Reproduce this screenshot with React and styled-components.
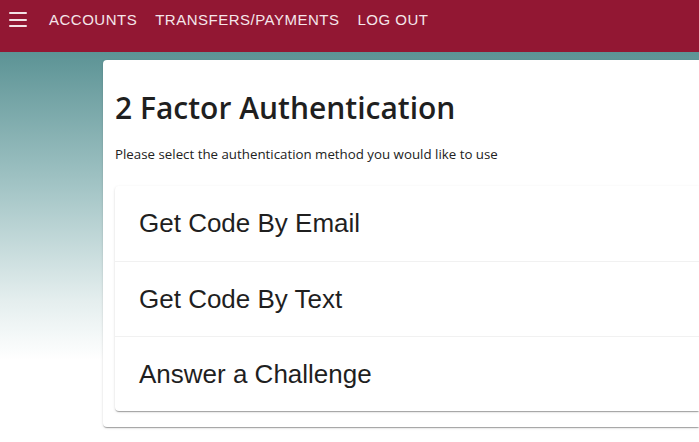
import React from 'react';
import styled, { createGlobalStyle } from 'styled-components';

const GlobalStyle = createGlobalStyle`
  html, body {
    margin: 0;
    padding: 0;
    height: 100%;
    overflow: hidden;
  }
  body {
    background: #ffffff;
    font-family: 'Liberation Sans', Arial, sans-serif;
  }
`;

const Page = styled.div`
  width: 100vw;
  height: 100vh;
  display: flex;
  flex-direction: column;
  background: linear-gradient(180deg, #5c9395 52px, #9fc2c3 180px, #e4eeee 300px, #ffffff 360px);
`;

const NavBar = styled.header`
  height: 52px;
  flex-shrink: 0;
  background-color: #921733;
  display: flex;
  align-items: center;
  padding: 0 0 13px 9px;
  box-sizing: border-box;
`;

const MenuButton = styled.button`
  width: 18px;
  height: 15px;
  padding: 0;
  margin-right: 22px;
  border: none;
  background: transparent;
  display: flex;
  flex-direction: column;
  justify-content: space-between;
  cursor: pointer;

  span {
    display: block;
    height: 2px;
    border-radius: 1px;
    background: #f3e3e7;
  }
`;

const NavLinks = styled.nav`
  display: flex;
  gap: 18px;
`;

const NavLink = styled.a`
  font-family: 'Liberation Sans', Arial, sans-serif;
  font-size: 15px;
  letter-spacing: 0.5px;
  color: #f5e6ea;
  text-decoration: none;
  text-transform: uppercase;
  cursor: pointer;
`;

const Main = styled.main`
  flex: 1;
  padding: 8px 0 0 103px;
  display: flex;
  align-items: flex-start;
`;

const Card = styled.section`
  flex: 1;
  background: #ffffff;
  border-radius: 4px 0 0 4px;
  box-shadow: 0 2px 1px -1px rgba(0,0,0,0.2), 0 1px 1px 0 rgba(0,0,0,0.14), 0 1px 3px 0 rgba(0,0,0,0.12);
  padding: 28px 0 16px 12px;
`;

const Title = styled.h1`
  margin: 0;
  font-family: 'Open Sans', 'Noto Sans', sans-serif;
  font-weight: 600;
  font-size: 30px;
  line-height: 40px;
  color: #1f1f1f;
`;

const Subtitle = styled.p`
  margin: 17px 0 23px;
  font-family: 'Open Sans', 'Noto Sans', sans-serif;
  font-size: 13.3px;
  line-height: 18px;
  color: #222222;
`;

const MethodList = styled.ul`
  list-style: none;
  margin: 0;
  padding: 0;
  background: #ffffff;
  border-radius: 4px 0 0 4px;
  box-shadow: 0 2px 1px -1px rgba(0,0,0,0.2), 0 1px 1px 0 rgba(0,0,0,0.14), 0 1px 3px 0 rgba(0,0,0,0.12);
`;

const MethodItem = styled.li`
  height: 75px;
  box-sizing: border-box;
  display: flex;
  align-items: center;
  padding-left: 24px;
  font-family: 'Liberation Sans', Arial, sans-serif;
  font-size: 26px;
  color: #1f1f1f;
  cursor: pointer;

  & + & {
    border-top: 1px solid #f1f1f1;
  }
`;

const links = ['Accounts', 'Transfers/Payments', 'Log Out'];
const methods = ['Get Code By Email', 'Get Code By Text', 'Answer a Challenge'];

export default function App() {
  return (
    <>
      <GlobalStyle />
      <Page>
        <NavBar>
          <MenuButton aria-label="menu">
            <span />
            <span />
            <span />
          </MenuButton>
          <NavLinks>
            {links.map((l) => (
              <NavLink key={l}>{l}</NavLink>
            ))}
          </NavLinks>
        </NavBar>
        <Main>
          <Card>
            <Title>2 Factor Authentication</Title>
            <Subtitle>Please select the authentication method you would like to use</Subtitle>
            <MethodList>
              {methods.map((m) => (
                <MethodItem key={m}>{m}</MethodItem>
              ))}
            </MethodList>
          </Card>
        </Main>
      </Page>
    </>
  );
}
